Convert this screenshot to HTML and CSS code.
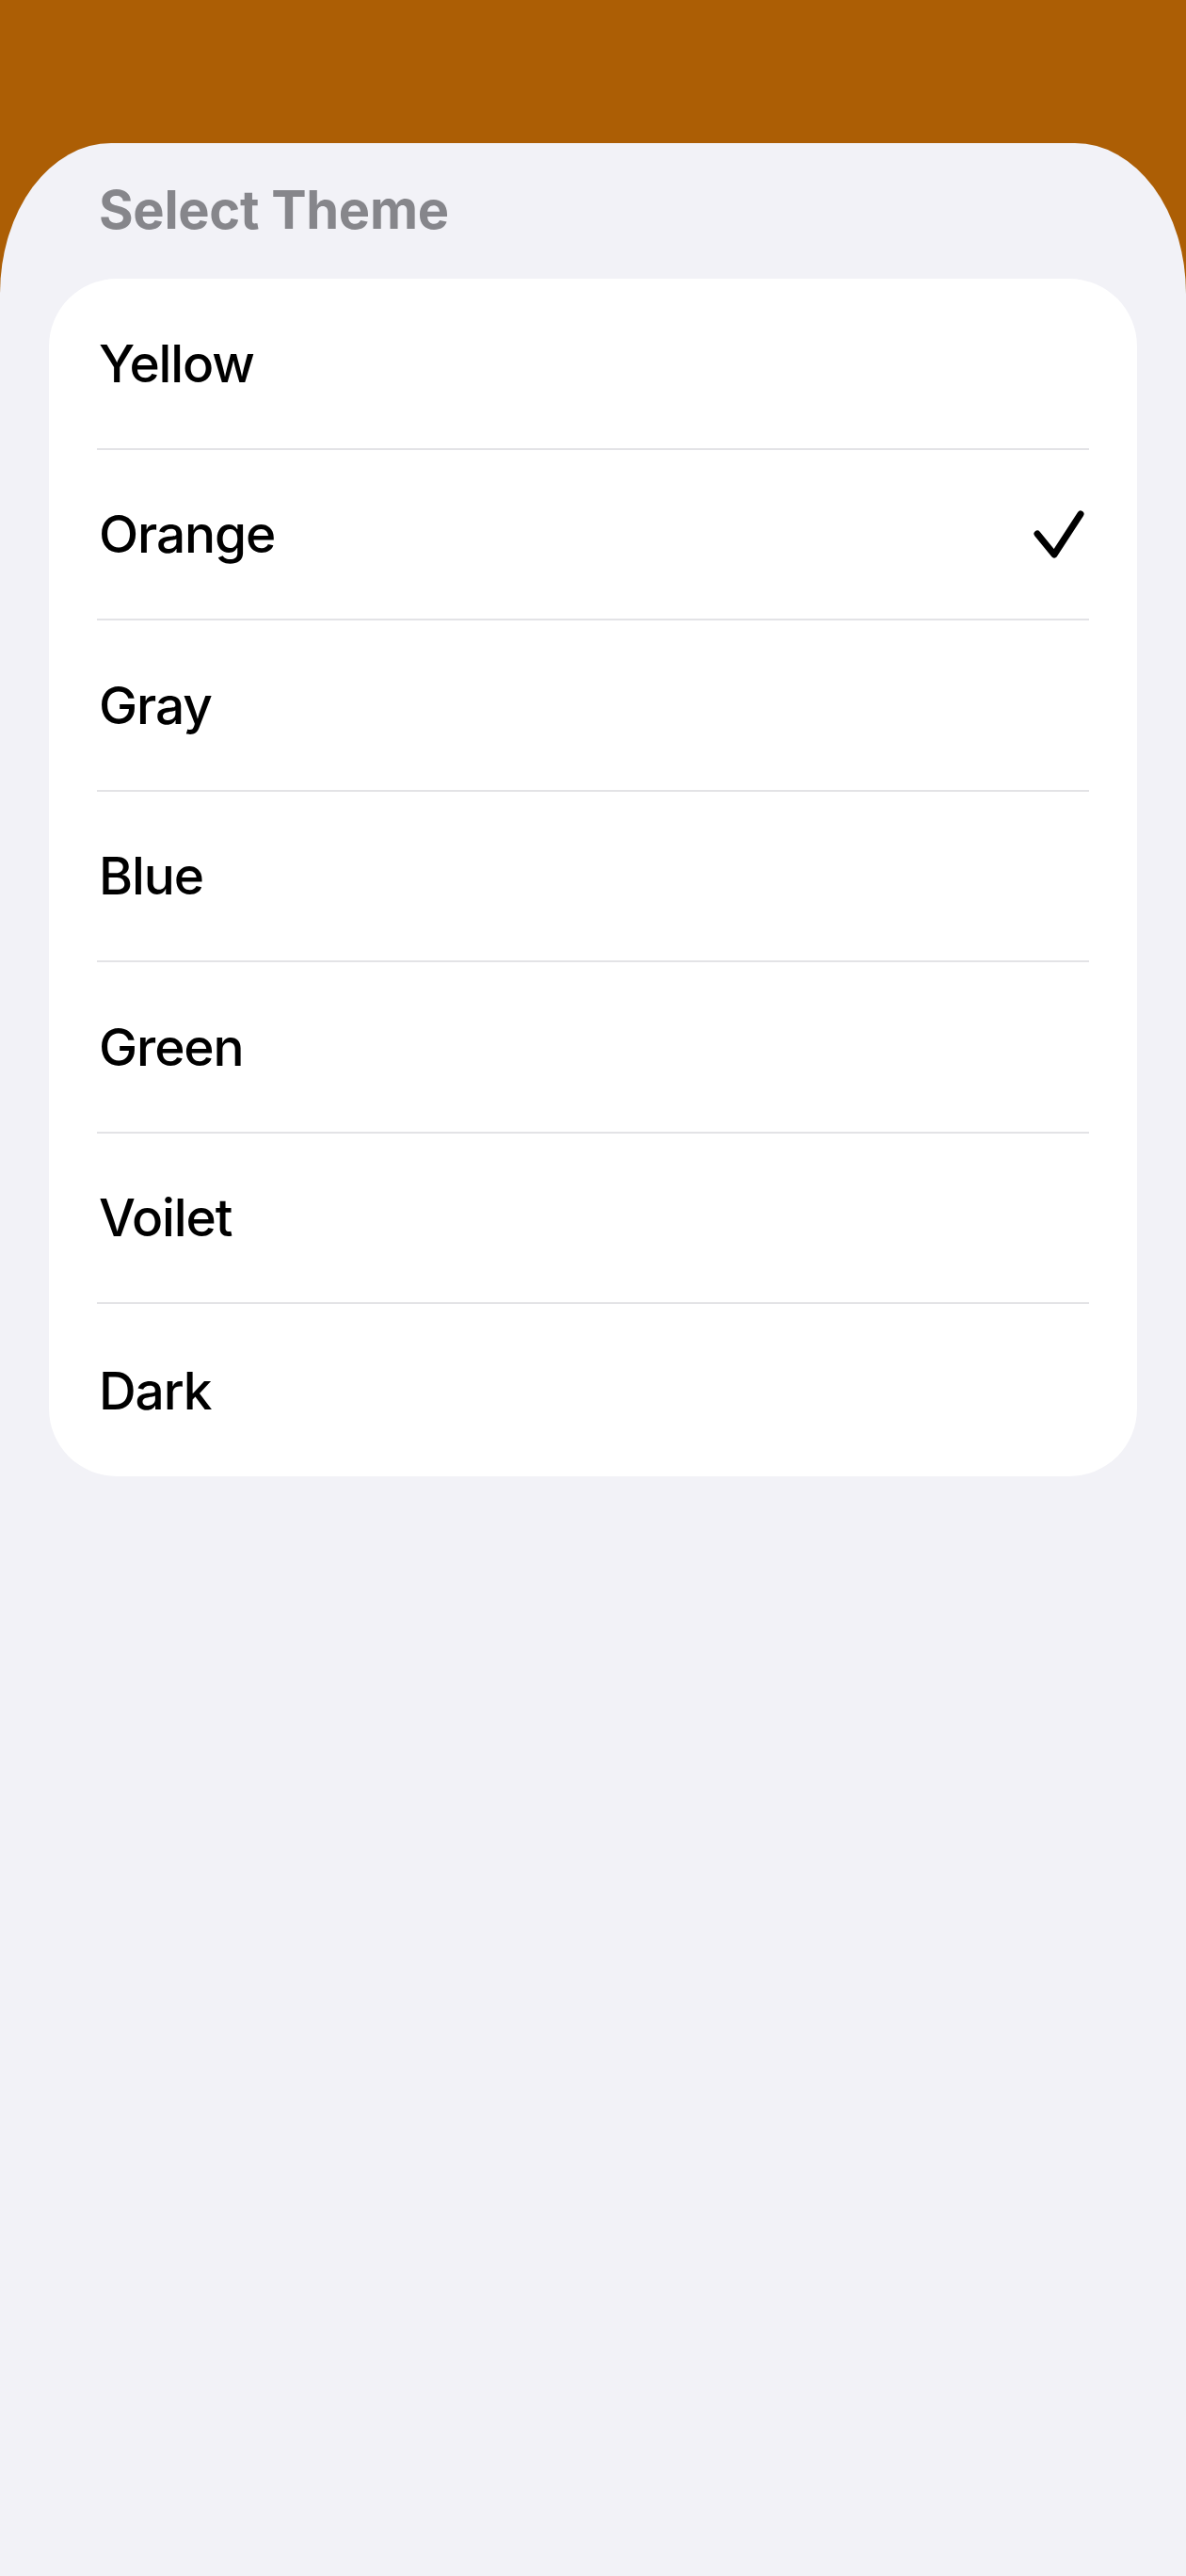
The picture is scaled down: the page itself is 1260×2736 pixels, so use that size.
FILE: index.html
```html
<!DOCTYPE html>
<html lang="en">
<head>
<meta charset="utf-8">
<title>Select Theme</title>
<link rel="stylesheet" href="styles.css">
</head>
<body>
<div class="backdrop"></div>
<main class="sheet">
  <h2 class="section-title">Select Theme</h2>
  <ul class="list">
    <li class="row"><span class="label">Yellow</span></li>
    <li class="row"><span class="label">Orange</span>
      <svg class="check" width="56" height="56" viewBox="0 0 56 56" aria-hidden="true"><polyline points="5,28 23,50 51,7" fill="none" stroke="#000" stroke-width="7" stroke-linecap="round" stroke-linejoin="round"/></svg>
    </li>
    <li class="row"><span class="label">Gray</span></li>
    <li class="row"><span class="label">Blue</span></li>
    <li class="row"><span class="label">Green</span></li>
    <li class="row"><span class="label">Voilet</span></li>
    <li class="row"><span class="label">Dark</span></li>
  </ul>
</main>
</body>
</html>
```
FILE: styles.css
```css
html, body {
  margin: 0;
  padding: 0;
}
body {
  background: #AC5E05;
  font-family: Inter, "Noto Sans", "Liberation Sans", sans-serif;
  -webkit-font-smoothing: antialiased;
}
.backdrop {
  height: 152px;
}
.sheet {
  background: #F2F2F7;
  border-radius: 118px 118px 0 0 / 160px 160px 0 0;
  min-height: calc(100vh - 152px);
  padding: 37px 52px 0 52px;
  box-sizing: border-box;
}
.section-title {
  margin: 0 0 39px 0;
  padding-left: 53px;
  font-size: 56px;
  line-height: 68px;
  font-weight: 700;
  color: #86868B;
  letter-spacing: -0.3px;
}
.list {
  list-style: none;
  margin: 0;
  padding: 0 51px;
  background: #FFFFFF;
  border-radius: 72px;
}
.row {
  height: 179.5px;
  display: flex;
  align-items: center;
  justify-content: space-between;
  border-bottom: 2px solid #E3E3E6;
}
.row:last-child {
  border-bottom: none;
  height: 183px;
}
.label {
  padding-left: 2px;
  font-size: 55px;
  font-weight: 500;
  color: #000;
  letter-spacing: -1.1px;
}
.check {
  display: block;
  margin-right: 4px;
}
```
